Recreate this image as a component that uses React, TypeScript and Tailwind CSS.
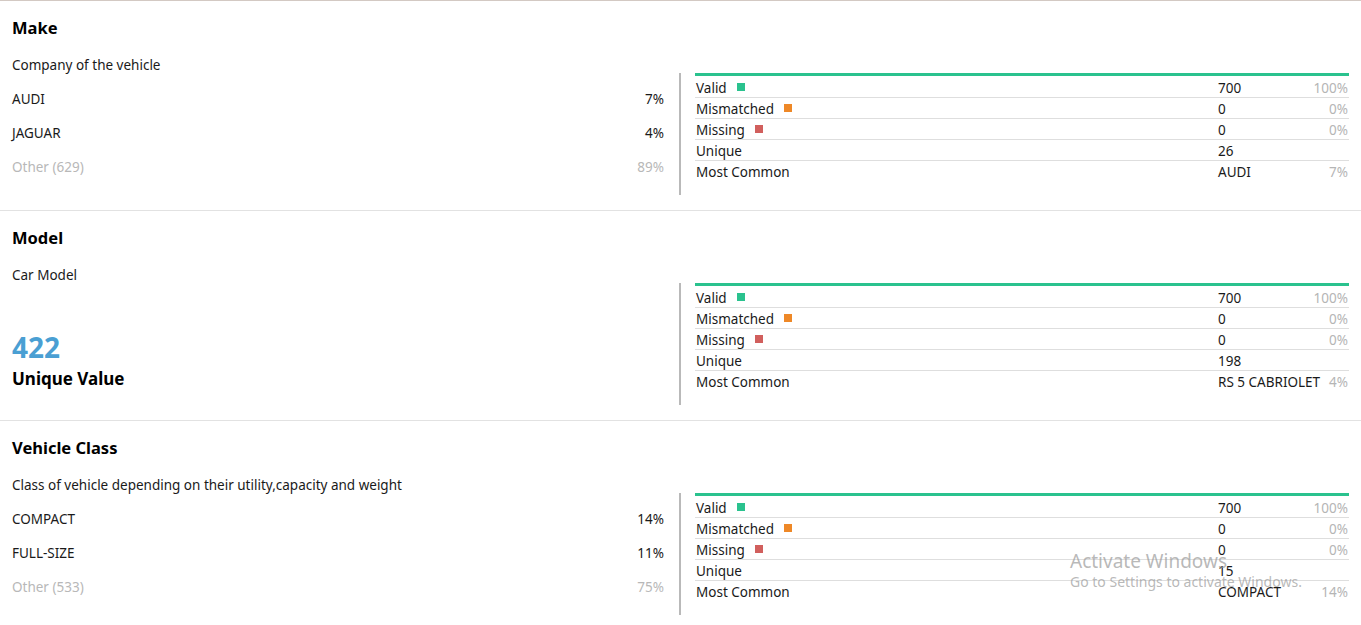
import React from "react";

type Row = { label: string; color?: string; value: string; pct?: string };

const font = { fontFamily: '"Noto Sans", "Open Sans", sans-serif' };

function StatsTable({ rows }: { rows: Row[] }) {
  return (
    <div className="mt-[25px] h-[122px] w-[670px] shrink-0 border-l-2 border-[#b9b9b9] pl-[14px]">
      <div className="h-[3px] bg-[#2ac28e]" />
      <div className="h-px" />
      {rows.map((r, i) => (
        <div
          key={r.label}
          className={`flex h-[21px] items-center pt-[2px] pl-px text-[13.5px] text-[#1a1a1a] ${i < rows.length - 1 ? "border-b border-[#dedede]" : ""}`}
        >
          <div className="flex w-[522px] items-center">
            <span>{r.label}</span>
            {r.color === "green" && <span className="ml-[10px] -mt-[2px] h-[8px] w-[8px] bg-[#2ac28e]" />}
            {r.color === "orange" && <span className="ml-[10px] -mt-[2px] h-[8px] w-[8px] bg-[#ee8827]" />}
            {r.color === "red" && <span className="ml-[10px] -mt-[2px] h-[8px] w-[8px] bg-[#d15f5d]" />}
          </div>
          <div className="flex-1">{r.value}</div>
          <div className="pr-px text-right text-[#b5b5b5]">{r.pct}</div>
        </div>
      ))}
    </div>
  );
}

function Section({
  title,
  desc,
  left,
  rows,
}: {
  title: string;
  desc: string;
  left: React.ReactNode;
  rows: Row[];
}) {
  return (
    <div className="h-[210px] border-b border-[#e2e2e2] px-[12px] pt-[16px]">
      <div className="text-[16.5px] font-bold leading-[22px] text-black">{title}</div>
      <div className="mt-[9px] flex">
        <div className="flex-1 pr-[15px]">
          <div className="flex h-[34px] items-center text-[13.5px] text-[#1a1a1a]">{desc}</div>
          {left}
        </div>
        <StatsTable rows={rows} />
      </div>
    </div>
  );
}

function TopRow({ name, pct, muted }: { name: string; pct: string; muted?: boolean }) {
  return (
    <div
      className={`flex h-[34px] items-center justify-between text-[13.5px] ${muted ? "text-[#b8b8b8]" : "text-[#1a1a1a]"}`}
    >
      <span>{name}</span>
      <span>{pct}</span>
    </div>
  );
}

const stdRows = (unique: string, common: string, commonPct: string): Row[] => [
  { label: "Valid", color: "green", value: "700", pct: "100%" },
  { label: "Mismatched", color: "orange", value: "0", pct: "0%" },
  { label: "Missing", color: "red", value: "0", pct: "0%" },
  { label: "Unique", value: unique },
  { label: "Most Common", value: common, pct: commonPct },
];

export default function App() {
  return (
    <div className="relative min-h-[625px] border-t border-[#d3c9c3] bg-white" style={font}>
      <Section
        title="Make"
        desc="Company of the vehicle"
        rows={stdRows("26", "AUDI", "7%")}
        left={
          <>
            <TopRow name="AUDI" pct="7%" />
            <TopRow name="JAGUAR" pct="4%" />
            <TopRow name="Other (629)" pct="89%" muted />
          </>
        }
      />
      <Section
        title="Model"
        desc="Car Model"
        rows={stdRows("198", "RS 5 CABRIOLET", "4%")}
        left={
          <div className="mt-[38px]">
            <div className="text-[28px] font-bold leading-[34px] text-[#4a9fd3]">422</div>
            <div className="mt-[3px] text-[17px] font-bold leading-[24px] text-black">Unique Value</div>
          </div>
        }
      />
      <Section
        title="Vehicle Class"
        desc="Class of vehicle depending on their utility,capacity and weight"
        rows={stdRows("15", "COMPACT", "14%")}
        left={
          <>
            <TopRow name="COMPACT" pct="14%" />
            <TopRow name="FULL-SIZE" pct="11%" />
            <TopRow name="Other (533)" pct="75%" muted />
          </>
        }
      />
      <div className="pointer-events-none absolute left-[1070px] top-[548px] text-[#9a9a9a]/70">
        <div className="text-[19px] leading-[24px]">Activate Windows</div>
        <div className="text-[14px] leading-[18px]">Go to Settings to activate Windows.</div>
      </div>
    </div>
  );
}
